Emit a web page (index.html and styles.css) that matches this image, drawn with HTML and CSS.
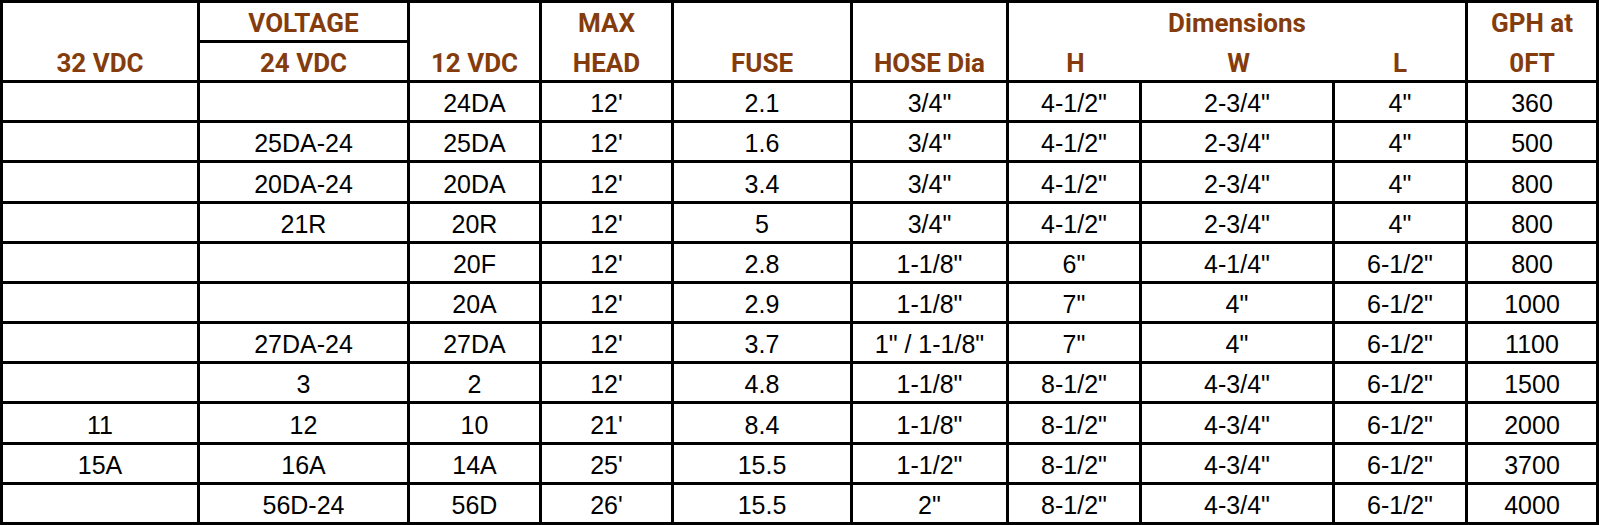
FILE: index.html
```html
<!DOCTYPE html>
<html lang="en">
<head>
<meta charset="utf-8">
<title>Pump specifications</title>
<link rel="stylesheet" href="styles.css">
</head>
<body>
<div class="sheet">
  <div class="c h tall">32 VDC</div>
  <div class="c h top">VOLTAGE</div>
  <div class="c h tall">12 VDC</div>
  <div class="c h top nb">MAX</div>
  <div class="c h tall">FUSE</div>
  <div class="c h tall">HOSE Dia</div>
  <div class="c h top nb span3">Dimensions</div>
  <div class="c h top nb">GPH at</div>

  <div class="c h bot">24 VDC</div>
  <div class="c h bot">HEAD</div>
  <div class="c h bot nr">H</div>
  <div class="c h bot nr">W</div>
  <div class="c h bot">L</div>
  <div class="c h bot">0FT</div>

  <div class="c d"></div><div class="c d"></div><div class="c d">24DA</div><div class="c d">12'</div><div class="c d">2.1</div><div class="c d">3/4"</div><div class="c d">4-1/2"</div><div class="c d">2-3/4"</div><div class="c d">4"</div><div class="c d">360</div>
  <div class="c d"></div><div class="c d">25DA-24</div><div class="c d">25DA</div><div class="c d">12'</div><div class="c d">1.6</div><div class="c d">3/4"</div><div class="c d">4-1/2"</div><div class="c d">2-3/4"</div><div class="c d">4"</div><div class="c d">500</div>
  <div class="c d"></div><div class="c d">20DA-24</div><div class="c d">20DA</div><div class="c d">12'</div><div class="c d">3.4</div><div class="c d">3/4"</div><div class="c d">4-1/2"</div><div class="c d">2-3/4"</div><div class="c d">4"</div><div class="c d">800</div>
  <div class="c d"></div><div class="c d">21R</div><div class="c d">20R</div><div class="c d">12'</div><div class="c d">5</div><div class="c d">3/4"</div><div class="c d">4-1/2"</div><div class="c d">2-3/4"</div><div class="c d">4"</div><div class="c d">800</div>
  <div class="c d"></div><div class="c d"></div><div class="c d">20F</div><div class="c d">12'</div><div class="c d">2.8</div><div class="c d">1-1/8"</div><div class="c d">6"</div><div class="c d">4-1/4"</div><div class="c d">6-1/2"</div><div class="c d">800</div>
  <div class="c d"></div><div class="c d"></div><div class="c d">20A</div><div class="c d">12'</div><div class="c d">2.9</div><div class="c d">1-1/8"</div><div class="c d">7"</div><div class="c d">4"</div><div class="c d">6-1/2"</div><div class="c d">1000</div>
  <div class="c d"></div><div class="c d">27DA-24</div><div class="c d">27DA</div><div class="c d">12'</div><div class="c d">3.7</div><div class="c d">1" / 1-1/8"</div><div class="c d">7"</div><div class="c d">4"</div><div class="c d">6-1/2"</div><div class="c d">1100</div>
  <div class="c d"></div><div class="c d">3</div><div class="c d">2</div><div class="c d">12'</div><div class="c d">4.8</div><div class="c d">1-1/8"</div><div class="c d">8-1/2"</div><div class="c d">4-3/4"</div><div class="c d">6-1/2"</div><div class="c d">1500</div>
  <div class="c d">11</div><div class="c d">12</div><div class="c d">10</div><div class="c d">21'</div><div class="c d">8.4</div><div class="c d">1-1/8"</div><div class="c d">8-1/2"</div><div class="c d">4-3/4"</div><div class="c d">6-1/2"</div><div class="c d">2000</div>
  <div class="c d">15A</div><div class="c d">16A</div><div class="c d">14A</div><div class="c d">25'</div><div class="c d">15.5</div><div class="c d">1-1/2"</div><div class="c d">8-1/2"</div><div class="c d">4-3/4"</div><div class="c d">6-1/2"</div><div class="c d">3700</div>
  <div class="c d"></div><div class="c d">56D-24</div><div class="c d">56D</div><div class="c d">26'</div><div class="c d">15.5</div><div class="c d">2"</div><div class="c d">8-1/2"</div><div class="c d">4-3/4"</div><div class="c d">6-1/2"</div><div class="c d">4000</div>
</div>
</body>
</html>
```

FILE: styles.css
```css
html, body {
  margin: 0;
  padding: 0;
  background: #ffffff;
}

.sheet {
  box-sizing: border-box;
  width: 1599px;
  height: 525px;
  display: grid;
  grid-template-columns: 197px 210px 132px 132px 179px 156px 133px 193px 133px 131px;
  grid-template-rows: 40px 40px repeat(11, 1fr);
  border-left: 3px solid #000;
  border-top: 3px solid #000;
  background: #fff;
}

.c {
  box-sizing: border-box;
  display: flex;
  justify-content: center;
  align-items: flex-end;
  border-right: 3px solid #000;
  border-bottom: 3px solid #000;
  white-space: nowrap;
  min-width: 0;
}

.h {
  font-family: "Roboto", "Liberation Sans", sans-serif;
  font-weight: 700;
  font-size: 26px;
  line-height: 26px;
  color: #843c0c;
}

.tall {
  grid-row: span 2;
  padding-bottom: 4px;
}

.top {
  align-items: flex-start;
  padding-top: 7px;
}

.bot {
  padding-bottom: 4px;
}

.nb {
  border-bottom: 0;
}

.nr {
  border-right: 0;
}

.span3 {
  grid-column: span 3;
}

.d {
  font-family: "Liberation Sans", Arial, sans-serif;
  font-size: 25px;
  line-height: 25px;
  color: #000;
  padding-bottom: 4px;
}
```
